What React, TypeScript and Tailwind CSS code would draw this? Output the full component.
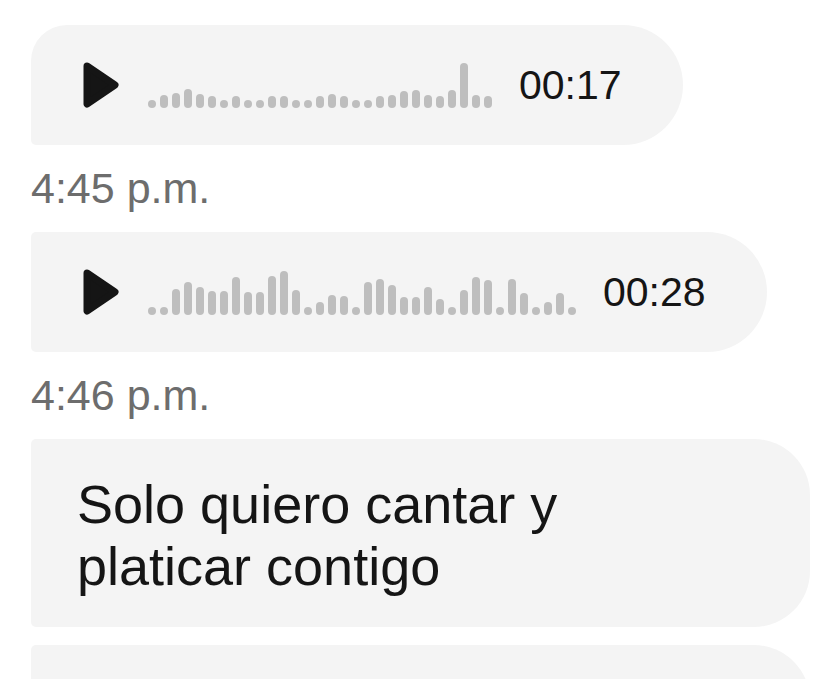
import React from "react";

const wave1 = [8, 13, 15, 19, 14, 12, 8, 12, 8, 8, 12, 12, 8, 8, 12, 14, 12, 8, 8, 12, 13, 17, 18, 13, 12, 18, 45, 13, 12];
const wave2 = [8, 8, 26, 33, 28, 24, 24, 38, 23, 23, 39, 44, 25, 8, 13, 20, 19, 8, 33, 36, 30, 18, 18, 28, 16, 8, 25, 38, 35, 8, 36, 22, 8, 13, 22, 8];

function Play() {
  return (
    <svg width="36" height="46" viewBox="0 0 36 46" className="shrink-0">
      <polygon
        points="4,4 32,23 4,42"
        fill="#151515"
        stroke="#151515"
        strokeWidth="7"
        strokeLinejoin="round"
      />
    </svg>
  );
}

function Wave({ bars }: { bars: number[] }) {
  return (
    <div className="ml-[29px] flex h-[46px] items-end gap-[4px]">
      {bars.map((h, i) => (
        <div key={i} className="w-[8px] shrink-0 rounded-full bg-[#bebebe]" style={{ height: h }} />
      ))}
    </div>
  );
}

function Voice({ bars, time, className }: { bars: number[]; time: string; className: string }) {
  return (
    <div className={"flex h-[120px] items-center bg-[#f4f4f4] pl-[52px] " + className}>
      <div className="flex items-end">
        <Play />
        <Wave bars={bars} />
      </div>
      <div className="ml-[27px] text-[41px] leading-none text-[#151515] [font-family:'Liberation_Sans',Arial,sans-serif]">
        {time}
      </div>
    </div>
  );
}

function Stamp({ text }: { text: string }) {
  return (
    <div className="flex h-[87px] items-center text-[43px] leading-none text-[#6d6d6d] [font-family:'Liberation_Sans',Arial,sans-serif]">
      {text}
    </div>
  );
}

export default function App() {
  return (
    <div className="h-[679px] w-[823px] overflow-hidden bg-white pl-[31px] pt-[25px]">
      <div className="flex flex-col">
        <Voice bars={wave1} time="00:17" className="w-[652px] rounded-bl-[5px] rounded-tl-[36px] rounded-r-[60px]" />
        <Stamp text="4:45 p.m." />
        <Voice bars={wave2} time="00:28" className="w-[736px] rounded-l-[5px] rounded-r-[60px]" />
        <Stamp text="4:46 p.m." />
        <div className="w-[779px] rounded-l-[5px] rounded-r-[56px] bg-[#f4f4f4] pb-[30px] pl-[46px] pt-[34px] text-[54px] leading-[62px] text-[#151515] [font-family:'Liberation_Sans',Arial,sans-serif]">
          Solo quiero cantar y<br />platicar contigo
        </div>
        <div className="mt-[18px] h-[200px] w-[779px] shrink-0 rounded-tl-[5px] rounded-tr-[56px] bg-[#f4f4f4]" />
      </div>
    </div>
  );
}
